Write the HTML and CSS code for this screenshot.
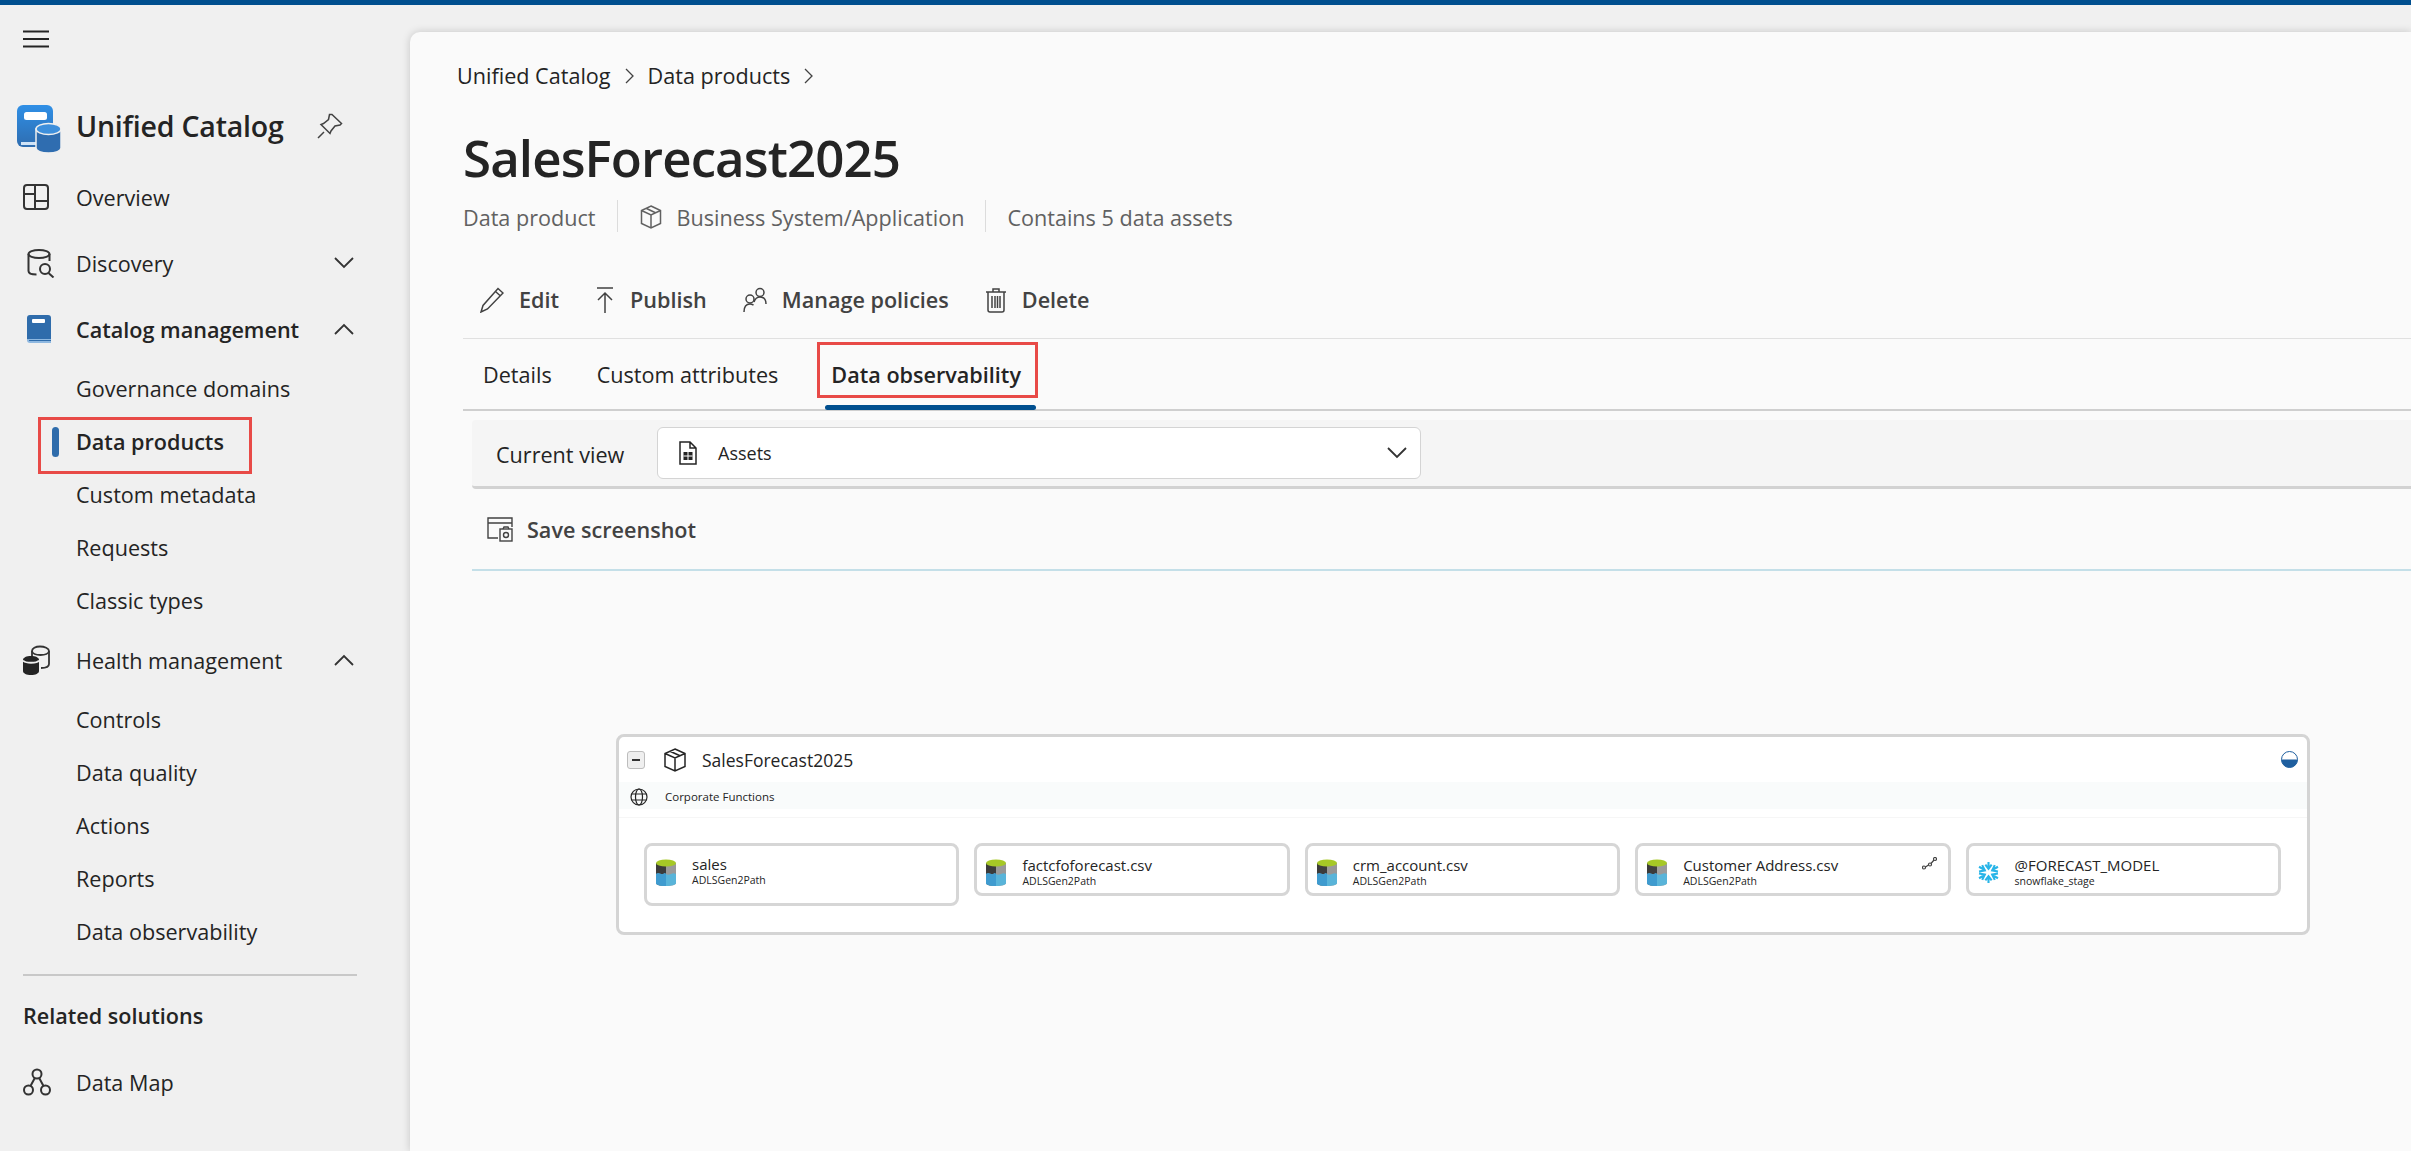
FILE: index.html
```html
<!DOCTYPE html>
<html lang="en">
<head>
    <meta charset="UTF-8">
    <title>SalesForecast2025</title>
    <link rel="stylesheet" href="styles.css">
</head>
<body>
    <svg class="defs" width="0" height="0">
        <defs>
            <linearGradient id="logoBlue" x1="0" y1="0" x2="0" y2="1">
                <stop offset="0" stop-color="#2f8fe6"/>
                <stop offset="1" stop-color="#2f6db0"/>
            </linearGradient>
            <g id="storage">
                <path d="M0 4v20c0 2 4.500 3 10 3s10-1 10-3V4z" fill="#9a9a9a"/>
                <path d="M0 4v20c0 2 4.500 3 10 3V4z" fill="#3b3b3b"/>
                <path d="M0 15c3-2 5 1 7 0s2-1 3 0 3 1 5 0 3-1 5 0v9c0 2-4.500 3-10 3S0 26 0 24z" fill="#59b4d9"/>
                <path d="M0 15c3-2 5 1 7 0s2-1 3 0v12c-5.500 0-10-1-10-3z" fill="#3f9bcf"/>
                <ellipse cx="10" cy="4" rx="10" ry="3.600" fill="#a6c826"/>
            </g>
        </defs>
    </svg>

    <div class="topbar"></div>
    <div class="app">
        <nav class="sidebar">
            <div class="menu-btn">
                <svg width="28" height="18" viewBox="0 0 28 18"><path d="M1 1.500h26M1 9h26M1 16.500h26" stroke="#242424" stroke-width="2"/></svg>
            </div>
            <div class="brand">
                <svg width="44" height="48" viewBox="0 0 44 48">
                    <path d="M6 0h24a6 6 0 0 1 6 6v36H6a6 6 0 0 1-6-6V6a6 6 0 0 1 6-6z" fill="url(#logoBlue)"/>
                    <rect x="7" y="7" width="23" height="8" rx="2.500" fill="#fff"/>
                    <path d="M4 37h24v3H4z" fill="#cfe3f7"/>
                    <path d="M19 24h25v19c0 3-5.500 5-12.500 5S19 46 19 43z" fill="#2f6db0" stroke="#f0f0f0" stroke-width="1.500"/>
                    <ellipse cx="31.500" cy="24" rx="12.500" ry="5.500" fill="#3d8fdc" stroke="#f0f0f0" stroke-width="1.500"/>
                </svg>
                <span class="brand-name">Unified Catalog</span>
                <svg class="pin" width="26" height="26" viewBox="0 0 26 26" fill="none" stroke="#424242" stroke-width="1.500"><path d="M15 1.500l9.500 9-1.500 1.500-5 1-4 5-1 2.500-9-9 2.500-1 5-4 1-5z M7 19L1 25"/></svg>
            </div>
            <a class="nav-item">
                <span class="nav-icon"><svg width="26" height="26" viewBox="0 0 26 26" fill="none" stroke="#333" stroke-width="2"><rect x="1" y="1" width="24" height="24" rx="3"/><path d="M12 1v24M1 10h11M12 17h13"/></svg></span>
                Overview
            </a>
            <a class="nav-item">
                <span class="nav-icon nav-icon-shift"><svg width="28" height="29" viewBox="0 0 28 29" fill="none" stroke="#333" stroke-width="2"><ellipse cx="12" cy="5" rx="10.500" ry="4"/><path d="M1.500 5v17c0 2 3 3.500 8 3.500M22.500 5v7"/><circle cx="18" cy="20" r="5"/><path d="M21.500 24l5 4.500"/></svg></span>
                Discovery
                <svg class="chevron" width="20" height="12" viewBox="0 0 20 12" fill="none" stroke="#333" stroke-width="1.800"><path d="M1 1l9 9 9-9"/></svg>
            </a>
            <a class="nav-item nav-item-bold">
                <span class="nav-icon nav-icon-shift"><svg width="24" height="28" viewBox="0 0 24 28"><path d="M3 0h18a3 3 0 0 1 3 3v21H0V3a3 3 0 0 1 3-3z" fill="#2f6cab"/><rect x="5" y="4" width="13" height="4" rx="1" fill="#fff"/><path d="M0 24h24v4H3a3 3 0 0 1-3-3z" fill="#8fb8e0"/><path d="M2 25h22v1H2z" fill="#2f6cab"/></svg></span>
                Catalog management
                <svg class="chevron" width="20" height="12" viewBox="0 0 20 12" fill="none" stroke="#333" stroke-width="1.800"><path d="M1 11l9-9 9 9"/></svg>
            </a>
            <a class="sub-item">Governance domains</a>
            <a class="sub-item sub-item-active">
                <span class="active-bar"></span>
                <span class="callout callout-nav"></span>
                Data products
            </a>
            <a class="sub-item">Custom metadata</a>
            <a class="sub-item">Requests</a>
            <a class="sub-item">Classic types</a>
            <a class="nav-item">
                <span class="nav-icon"><svg width="28" height="31" viewBox="0 0 28 31"><path d="M9 12V6c0-2.500 3.500-4.500 8-4.500s9 2 9 4.500v13c0 2-2 4-8 4" fill="none" stroke="#333" stroke-width="1.800"/><path d="M9 6c0 2.500 4 4 8.500 4s8.500-1.500 8.500-4" fill="none" stroke="#333" stroke-width="1.800"/><path d="M0 15c0-2.500 3.500-4 8-4s8 1.500 8 4v11c0 2.500-3.500 4-8 4s-8-1.500-8-4z" fill="#242424"/><path d="M0 15.500c2 3 14 3 16 0" fill="none" stroke="#f0f0f0" stroke-width="1.800"/></svg></span>
                Health management
                <svg class="chevron" width="20" height="12" viewBox="0 0 20 12" fill="none" stroke="#333" stroke-width="1.800"><path d="M1 11l9-9 9 9"/></svg>
            </a>
            <a class="sub-item">Controls</a>
            <a class="sub-item">Data quality</a>
            <a class="sub-item">Actions</a>
            <a class="sub-item">Reports</a>
            <a class="sub-item">Data observability</a>
            <div class="nav-divider"></div>
            <div class="nav-heading">Related solutions</div>
            <a class="nav-item">
                <span class="nav-icon"><svg width="28" height="28" viewBox="0 0 28 28" fill="none" stroke="#333" stroke-width="2"><circle cx="14" cy="6" r="4.500"/><circle cx="5.500" cy="22" r="4.500"/><circle cx="22.500" cy="22" r="4.500"/><path d="M11.800 10L7.500 18M16.200 10l4.300 8"/></svg></span>
                Data Map
            </a>
        </nav>

        <main class="content">
            <div class="breadcrumb">
                <span>Unified Catalog</span>
                <svg width="9" height="16" viewBox="0 0 9 16" fill="none" stroke="#424242" stroke-width="1.300"><path d="M1 1l7 7-7 7"/></svg>
                <span>Data products</span>
                <svg width="9" height="16" viewBox="0 0 9 16" fill="none" stroke="#424242" stroke-width="1.300"><path d="M1 1l7 7-7 7"/></svg>
            </div>
            <h1 class="page-title">SalesForecast2025</h1>
            <div class="meta">
                <span class="meta-cell">Data product</span>
                <span class="meta-cell">
                    <svg width="24" height="24" viewBox="0 0 24 24" fill="none" stroke="#616161" stroke-width="1.500"><path d="M12 1l9.500 4.500v13L12 23l-9.500-4.500v-13zM2.500 5.500L12 10l9.500-4.500M12 10v13M7 3.200l9.500 4.600"/></svg>
                    Business System/Application
                </span>
                <span class="meta-cell">Contains 5 data assets</span>
            </div>
            <div class="toolbar">
                <button class="tool">
                    <svg width="24" height="26" viewBox="0 0 24 26" fill="none" stroke="#424242" stroke-width="1.500"><path d="M18 1.500l5 4.500L7.500 22 1 25l2-6.500zM15.500 4.500l5 4.500"/></svg>
                    Edit
                </button>
                <button class="tool">
                    <svg width="20" height="26" viewBox="0 0 20 26" fill="none" stroke="#424242" stroke-width="1.500"><path d="M2 1h16M10 26V7M3 13l7-7 7 7"/></svg>
                    Publish
                </button>
                <button class="tool">
                    <svg width="24" height="26" viewBox="0 0 24 26" fill="none" stroke="#424242" stroke-width="1.500"><circle cx="7" cy="12" r="4"/><path d="M1 25c0-5 2-8 6-8 1.500 0 2.500.5 3.500 1"/><circle cx="17" cy="5.500" r="4"/><path d="M11 15c1-3 3-5 6-5 4 0 6 3 6 7"/></svg>
                    Manage policies
                </button>
                <button class="tool">
                    <svg width="22" height="26" viewBox="0 0 22 26" fill="none" stroke="#424242" stroke-width="1.500"><path d="M1 5h20M8 5V2h6v3M3 5v18a2 2 0 0 0 2 2h12a2 2 0 0 0 2-2V5M7 9v12M10 9v12M12.500 9v12M15 9v12"/></svg>
                    Delete
                </button>
            </div>
            <div class="tabs">
                <a class="tab">Details</a>
                <a class="tab">Custom attributes</a>
                <a class="tab tab-active">
                    <span class="callout callout-tab"></span>
                    Data observability
                    <span class="tab-indicator"></span>
                </a>
            </div>
            <div class="view-row">
                <span class="view-label">Current view</span>
                <div class="select">
                    <svg width="20" height="24" viewBox="0 0 20 24" fill="none" stroke="#242424" stroke-width="1.500"><path d="M2 1h10l6 6v16H2zM12 1v6h6"/><rect x="5.500" y="11" width="9" height="8" fill="#242424" stroke="none"/><path d="M5.500 15h9M10 11v8" stroke="#fff" stroke-width="1"/></svg>
                    <span>Assets</span>
                    <svg class="select-chevron" width="20" height="12" viewBox="0 0 20 12" fill="none" stroke="#333" stroke-width="1.800"><path d="M1 1l9 9 9-9"/></svg>
                </div>
            </div>
            <div class="save-row">
                <svg width="26" height="25" viewBox="0 0 26 25" fill="none" stroke="#424242" stroke-width="1.400"><path d="M11 21H1V1h24v9M1 6h24"/><rect x="13" y="12" width="12" height="12"/><path d="M16 12l1-2h4l1 2"/><circle cx="19" cy="18" r="2.500"/></svg>
                Save screenshot
            </div>

            <section class="product-box">
                <header class="product-head">
                    <span class="collapse-btn"><span class="minus"></span></span>
                    <svg class="product-cube" width="24" height="24" viewBox="0 0 24 24" fill="none" stroke="#242424" stroke-width="1.500"><path d="M12 1l10 4.500v13L12 23 2 18.500v-13zM2 5.500L12 10l10-4.500M12 10v13M7 3.200l10 4.600"/></svg>
                    <span class="product-name">SalesForecast2025</span>
                    <svg class="health-dot" width="17" height="17" viewBox="0 0 17 17"><circle cx="8.500" cy="8.500" r="8" fill="#fff" stroke="#1f5f9f"/><path d="M.5 8.500h16a8 8 0 0 1-16 0z" fill="#1f5f9f"/></svg>
                </header>
                <div class="domain-band">
                    <svg width="18" height="18" viewBox="0 0 18 18" fill="none" stroke="#242424" stroke-width="1.200"><circle cx="9" cy="9" r="8"/><ellipse cx="9" cy="9" rx="3.500" ry="8"/><path d="M1.500 6h15M1.500 12h15"/></svg>
                    <span>Corporate Functions</span>
                </div>
                <div class="asset-list">
                    <div class="asset asset-tall">
                        <svg class="asset-icon" width="20" height="27" viewBox="0 0 20 27"><use href="#storage"/></svg>
                        <div class="asset-text"><div class="asset-name">sales</div><div class="asset-type">ADLSGen2Path</div></div>
                    </div>
                    <div class="asset">
                        <svg class="asset-icon" width="20" height="27" viewBox="0 0 20 27"><use href="#storage"/></svg>
                        <div class="asset-text"><div class="asset-name">factcfoforecast.csv</div><div class="asset-type">ADLSGen2Path</div></div>
                    </div>
                    <div class="asset">
                        <svg class="asset-icon" width="20" height="27" viewBox="0 0 20 27"><use href="#storage"/></svg>
                        <div class="asset-text"><div class="asset-name">crm_account.csv</div><div class="asset-type">ADLSGen2Path</div></div>
                    </div>
                    <div class="asset">
                        <svg class="asset-icon" width="20" height="27" viewBox="0 0 20 27"><use href="#storage"/></svg>
                        <div class="asset-text"><div class="asset-name">Customer Address.csv</div><div class="asset-type">ADLSGen2Path</div></div>
                        <svg class="asset-link" width="15" height="13" viewBox="0 0 15 13" fill="none" stroke="#424242" stroke-width="1.200"><circle cx="2" cy="10.500" r="1.500"/><circle cx="8" cy="7.500" r="1.500"/><circle cx="13" cy="2" r="1.500"/><path d="M3.500 10l3-2M9 6.500l3-3.500"/></svg>
                    </div>
                    <div class="asset">
                        <svg class="asset-icon" width="21" height="21" viewBox="0 0 20 20" fill="none" stroke="#29b5e8" stroke-width="2"><path d="M10 0v7M7 2.500l3 4 3-4M10 20v-7M7 17.500l3-4 3 4M1 4.500l6 3.500M1 9l5.500-1L4 3M19 4.500L13 8M19 9l-5.500-1L16 3M1 15.500L7 12M1 11l5.500 1L4 17M19 15.500L13 12M19 11l-5.500 1 2.500 5"/></svg>
                        <div class="asset-text"><div class="asset-name">@FORECAST_MODEL</div><div class="asset-type">snowflake_stage</div></div>
                    </div>
                </div>
            </section>
        </main>
    </div>
</body>
</html>
```
FILE: styles.css
```css
* {
    box-sizing: border-box;
}

html,
body {
    margin: 0;
    height: 100%;
    overflow: hidden;
}

body {
    background-color: #f0f0f0;
    color: #242424;
    font-family: "Open Sans", "Noto Sans", Arial, sans-serif;
    font-size: 21.600px;
}

.defs {
    position: absolute;
}

.topbar {
    height: 5px;
    background-color: #004f8f;
}

.app {
    display: flex;
    height: 1146px;
}

/* left navigation */
.sidebar {
    flex: 0 0 410px;
    padding-right: 53px;
}

.menu-btn {
    display: flex;
    align-items: center;
    height: 67px;
    padding-left: 22px;
}

.brand {
    display: flex;
    align-items: center;
    height: 73px;
    margin-top: 20px;
    padding-left: 17px;
}

.brand-name {
    margin-left: 15px;
    margin-top: -6px;
    font-size: 28.500px;
    font-weight: 600;
    letter-spacing: -0.2px;
    white-space: nowrap;
}

.pin {
    margin-left: 33px;
    margin-top: -6px;
}

.nav-item {
    display: flex;
    align-items: center;
    height: 66px;
    padding: 0 0 2px 23px;
    white-space: nowrap;
}

.nav-icon {
    display: flex;
    flex: none;
    width: 53px;
}

.nav-icon-shift {
    padding-left: 4px;
}

.nav-item-bold {
    font-weight: 600;
}

.chevron {
    margin-left: auto;
    margin-right: 3px;
}

.sub-item {
    position: relative;
    display: flex;
    align-items: center;
    height: 53px;
    padding: 0 0 3px 76px;
    white-space: nowrap;
}

.sub-item-active {
    font-weight: 600;
}

.active-bar {
    position: absolute;
    left: 52px;
    top: 11px;
    width: 7px;
    height: 30px;
    border-radius: 4px;
    background-color: #2f6cab;
}

.callout {
    position: absolute;
    border: 3px solid #e84a47;
}

.callout-nav {
    left: 38px;
    top: 1px;
    width: 214px;
    height: 57px;
}

.nav-divider {
    height: 2px;
    margin: 15px 0 0 23px;
    background-color: #c8c8c8;
}

.nav-heading {
    display: flex;
    align-items: center;
    height: 74px;
    padding: 4px 0 0 23px;
    font-weight: 600;
}

/* main panel */
.content {
    flex: 1;
    min-width: 0;
    margin-top: 27px;
    padding-left: 47px;
    background-color: #fafafa;
    border-top-left-radius: 10px;
    box-shadow: 0 0 8px rgba(0, 0, 0, 0.18);
}

.breadcrumb {
    display: flex;
    align-items: center;
    gap: 14px;
    height: 88px;
    padding-bottom: 1px;
}

.page-title {
    display: flex;
    align-items: center;
    height: 76px;
    margin: 0 0 0 6px;
    padding-bottom: 2px;
    font-size: 51px;
    font-weight: 600;
    letter-spacing: -0.9px;
}

.meta {
    display: flex;
    height: 32px;
    margin: 4px 0 0 6px;
    color: #616161;
}

.meta-cell {
    display: flex;
    align-items: center;
    gap: 14px;
    padding: 2px 21px 0 0;
    margin-right: 21px;
    border-right: 1px solid #dcdcdc;
}

.meta-cell:last-child {
    border-right: none;
}

.toolbar {
    display: flex;
    align-items: center;
    gap: 36px;
    height: 107px;
    margin-left: 6px;
    padding: 29px 0 0 17px;
    border-bottom: 1px solid #e0e0e0;
}

.tool {
    display: flex;
    align-items: center;
    gap: 15px;
    padding: 0;
    border: none;
    background: none;
    color: #424242;
    font: inherit;
    font-weight: 600;
}

.tabs {
    display: flex;
    gap: 45px;
    height: 72px;
    margin-left: 6px;
    padding-left: 20px;
    border-bottom: 2px solid #cfcfcf;
}

.tab {
    position: relative;
    display: flex;
    align-items: center;
    height: 70px;
    white-space: nowrap;
}

.tab-active {
    margin-left: 8px;
    font-weight: 600;
}

.callout-tab {
    left: -14px;
    top: 3px;
    width: 221px;
    height: 56px;
}

.tab-indicator {
    position: absolute;
    left: -6px;
    top: 66px;
    width: 211px;
    height: 5px;
    border-radius: 3px;
    background-color: #004f8f;
}

.view-row {
    display: flex;
    align-items: center;
    height: 69px;
    margin: 9px 0 0 15px;
    padding-left: 24px;
    background-color: #f5f5f5;
    border-bottom: 3px solid #d2d2d2;
    border-radius: 4px 0 0 4px;
}

.view-label {
    width: 161px;
    margin-top: 2px;
    white-space: nowrap;
}

.select {
    display: flex;
    align-items: center;
    gap: 20px;
    width: 764px;
    height: 52px;
    padding: 0 13px 0 20px;
    background-color: #fff;
    border: 1px solid #d4d4d4;
    border-radius: 6px;
    font-size: 18px;
}

.select-chevron {
    margin-left: auto;
}

.save-row {
    display: flex;
    align-items: center;
    gap: 14px;
    height: 82px;
    margin-left: 15px;
    padding: 0 0 0 15px;
    border-bottom: 2px solid #c4dfe8;
    color: #424242;
    font-weight: 600;
}

/* data product diagram */
.product-box {
    width: 1694px;
    height: 201px;
    margin: 163px 0 0 159px;
    background-color: #fff;
    border: 3px solid #d4d4d4;
    border-radius: 8px;
}

.product-head {
    display: flex;
    align-items: center;
    height: 45px;
    padding: 0 9px 0 8px;
}

.collapse-btn {
    display: flex;
    align-items: center;
    justify-content: center;
    width: 18px;
    height: 18px;
    background-color: #efefef;
    border: 1px solid #bdbdbd;
    border-radius: 3px;
}

.minus {
    width: 8px;
    height: 2px;
    background-color: #333;
}

.product-cube {
    margin-left: 18px;
}

.product-name {
    margin-left: 15px;
    font-size: 17.500px;
}

.health-dot {
    margin-left: auto;
}

.domain-band {
    display: flex;
    align-items: center;
    gap: 17px;
    height: 27px;
    padding: 2px 0 0 11px;
    background-color: #f9fbfb;
    font-size: 11.500px;
}

.asset-list {
    display: flex;
    align-items: flex-start;
    gap: 15px;
    margin-top: 8px;
    padding: 25px 0 0 25px;
    border-top: 1px solid #f6f6f6;
}

.asset {
    position: relative;
    display: flex;
    align-items: center;
    flex: 0 0 315.400px;
    height: 53px;
    padding: 5px 0 0 9px;
    border: 3px solid #d6d6d6;
    border-radius: 8px;
}

.asset-tall {
    height: 63px;
    align-items: flex-start;
    padding-top: 13px;
}

.asset-icon {
    flex: none;
    margin-right: 16px;
}

.asset-tall .asset-text {
    margin-top: -3px;
}

.asset-name {
    font-size: 15px;
    line-height: 17px;
    white-space: nowrap;
}

.asset-type {
    font-size: 10.500px;
    line-height: 14px;
}

.asset-link {
    position: absolute;
    right: 11px;
    top: 11px;
}
```
